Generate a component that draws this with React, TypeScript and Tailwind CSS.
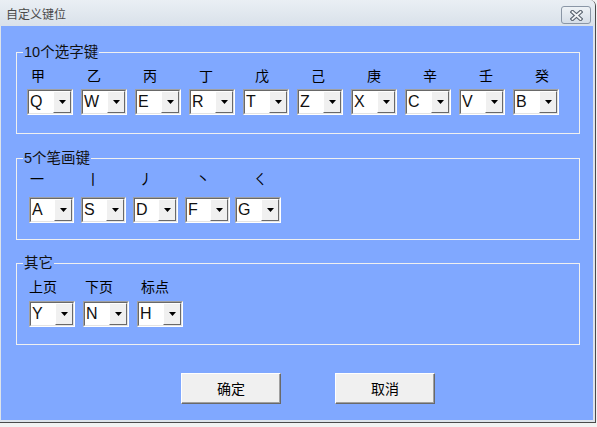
import React from "react";

const BLUE = "bg-[#80a8ff]";

function Tri() {
  return (
    <svg width="7" height="4" viewBox="0 0 7 4" className="block">
      <path d="M0 0H7L3.5 4Z" fill="#000" />
    </svg>
  );
}

function Combo({ v, w = "w-[46px]", extra = "" }: { v: string; w?: string; extra?: string }) {
  return (
    <div
      className={`${w} ${extra} h-[26px] flex border border-t-[#a0a0a0] border-l-[#a0a0a0] border-b-white border-r-white shrink-0`}
    >
      <div className="flex-1 flex border border-t-[#696969] border-l-[#696969] border-b-[#e3e3e3] border-r-[#e3e3e3] bg-white">
        <span className="flex-1 pl-[1px] text-[16px] leading-[22px] text-[#111] font-['Liberation_Sans',sans-serif]">
          {v}
        </span>
        <div className="w-[18px] flex items-center justify-center bg-[#f0f0f0] border border-t-white border-l-white border-b-[#696969] border-r-[#696969]">
          <Tri />
        </div>
      </div>
    </div>
  );
}

function Legend({ t }: { t: string }) {
  return (
    <span
      className={`self-start -mt-[9px] ml-[6px] px-[1px] ${BLUE} text-[14.5px] leading-[16px] text-[#111] font-['Liberation_Sans','Noto_Sans_CJK_SC',sans-serif]`}
    >
      {t}
    </span>
  );
}

function Btn({ t }: { t: string }) {
  return (
    <div className="w-[100px] h-[31px] flex items-center justify-center bg-[#f0f0f0] border border-t-white border-l-white border-b-[#696969] border-r-[#696969] shadow-[inset_-1px_-1px_0_#a0a0a0] text-[14px] text-black font-['Noto_Sans_CJK_SC',sans-serif]">
      {t}
    </div>
  );
}

const lab = "text-[14px] leading-[16px] text-black font-['Noto_Sans_CJK_SC',sans-serif]";

export default function App() {
  const g1Labels = ["甲", "乙", "丙", "丁", "戊", "己", "庚", "辛", "壬", "癸"];
  const g1Keys = ["Q", "W", "E", "R", "T", "Z", "X", "C", "V", "B"];
  return (
    <div className="w-[597px] h-[427px] bg-[#f2f2f2] overflow-hidden">
      <div className="w-[596px] h-[423px] flex flex-col bg-[#dde3ea] border-r border-b border-[#4a4a4a] rounded-tr-[6px] overflow-hidden">
        {/* title bar */}
        <div className="h-[26px] flex items-start bg-gradient-to-b from-[#eaeff4] to-[#d9e1ea]">
          <span className="ml-[6px] mt-[5px] text-[12px] leading-[18px] text-[#4a4a4a] font-['Noto_Sans_CJK_SC',sans-serif]">
            自定义键位
          </span>
          <div className="ml-auto mr-[4px] mt-[6px] w-[30px] h-[18px] rounded-[3px] border border-[#8a96a6] bg-gradient-to-b from-[#eef2f6] to-[#d6dee8] flex items-center justify-center">
            <svg width="13" height="11" viewBox="0 0 13 11">
              <path d="M2.5 2L10.5 9M10.5 2L2.5 9" stroke="#5a6470" strokeWidth="4" strokeLinecap="square" />
              <path d="M2.5 2L10.5 9M10.5 2L2.5 9" stroke="#f4f6f8" strokeWidth="1.8" strokeLinecap="square" />
            </svg>
          </div>
        </div>
        {/* body */}
        <div className={`ml-[1px] w-[592px] h-[394px] ${BLUE} flex flex-col`}>
          {/* group 1 */}
          <div className="ml-[15px] mt-[26px] w-[564px] h-[82px] border border-[#f0f0f0] flex flex-col">
            <Legend t="10个选字键" />
            <div className="mt-[7px] pl-[14px] flex h-[16px]">
              {g1Labels.map((l) => (
                <span key={l} className={`w-[56px] shrink-0 ${lab}`}>
                  {l}
                </span>
              ))}
            </div>
            <div className="mt-[6px] pl-[10px] flex gap-[8px]">
              {g1Keys.map((k) => (
                <Combo key={k} v={k} />
              ))}
            </div>
          </div>
          {/* group 2 */}
          <div className="ml-[15px] mt-[24px] w-[564px] h-[82px] border border-[#f0f0f0] flex flex-col">
            <Legend t="5个笔画键" />
            <div className="mt-[4px] pl-[13px] flex h-[16px]">
              <span className={`w-[56px] shrink-0 ${lab}`}>一</span>
              <span className={`w-[53px] shrink-0 ${lab}`}>丨</span>
              <span className={`w-[57px] shrink-0 ${lab}`}>丿</span>
              <span className={`w-[57px] shrink-0 ${lab}`}>丶</span>
              <span className={`w-[56px] shrink-0 ${lab}`}>ㄑ</span>
            </div>
            <div className="mt-[11px] pl-[12px] flex">
              <Combo v="A" w="w-[45px]" />
              <Combo v="S" w="w-[45px]" extra="ml-[7px]" />
              <Combo v="D" w="w-[45px]" extra="ml-[7px]" />
              <Combo v="F" w="w-[45px]" extra="ml-[7px]" />
              <Combo v="G" w="w-[46px]" extra="ml-[5px]" />
            </div>
          </div>
          {/* group 3 */}
          <div className="ml-[15px] mt-[23px] w-[564px] h-[82px] border border-[#f0f0f0] flex flex-col">
            <Legend t="其它" />
            <div className="mt-[7px] pl-[12px] flex h-[16px]">
              <span className={`w-[56px] shrink-0 ${lab}`}>上页</span>
              <span className={`w-[56px] shrink-0 ${lab}`}>下页</span>
              <span className={`w-[56px] shrink-0 ${lab}`}>标点</span>
            </div>
            <div className="mt-[7px] pl-[12px] flex gap-[8px]">
              <Combo v="Y" />
              <Combo v="N" />
              <Combo v="H" />
            </div>
          </div>
          {/* buttons */}
          <div className="mt-[28px] pl-[180px] flex gap-[54px]">
            <Btn t="确定" />
            <Btn t="取消" />
          </div>
        </div>
      </div>
    </div>
  );
}
